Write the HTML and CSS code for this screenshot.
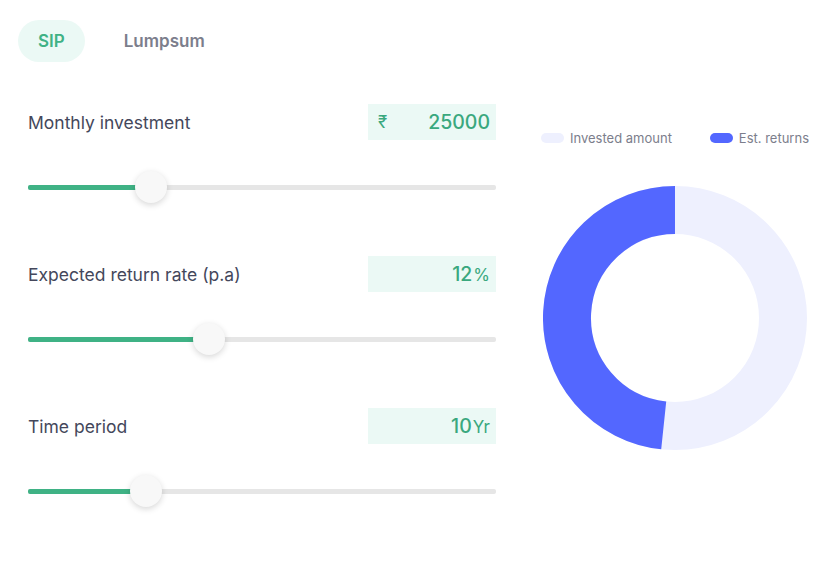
FILE: index.html
```html
<!DOCTYPE html>
<html>
<head>
<meta charset="utf-8">
<link rel="stylesheet" href="styles.css">
</head>
<body>
<div class="calc">
  <div class="tabs">
    <div class="tab active">SIP</div>
    <div class="tab">Lumpsum</div>
  </div>
  <div class="main">
    <div class="inputs">
      <div class="field">
        <div class="field-head">
          <span class="label">Monthly investment</span>
          <div class="valbox"><span class="prefix">₹</span><span class="num">25000</span></div>
        </div>
        <div class="slider">
          <div class="track"><div class="fill" style="width:123px"></div></div>
          <div class="thumb" style="left:107px"></div>
        </div>
      </div>
      <div class="field">
        <div class="field-head">
          <span class="label">Expected return rate (p.a)</span>
          <div class="valbox"><span class="num">12</span><span class="unit">%</span></div>
        </div>
        <div class="slider">
          <div class="track"><div class="fill" style="width:181px"></div></div>
          <div class="thumb" style="left:165px"></div>
        </div>
      </div>
      <div class="field">
        <div class="field-head">
          <span class="label">Time period</span>
          <div class="valbox"><span class="num">10</span><span class="unit">Yr</span></div>
        </div>
        <div class="slider">
          <div class="track"><div class="fill" style="width:118px"></div></div>
          <div class="thumb" style="left:102px"></div>
        </div>
      </div>
    </div>
    <div class="chart">
      <div class="legend">
        <div class="legend-item"><span class="swatch light"></span>Invested amount</div>
        <div class="legend-item"><span class="swatch blue"></span>Est. returns</div>
      </div>
      <svg class="donut" width="264" height="264" viewBox="0 0 264 264">
        <circle cx="132" cy="132" r="108" fill="none" stroke="#eef0fe" stroke-width="48"/>
        <path d="M 120.71 239.41 A 108 108 0 0 1 132 24" fill="none" stroke="#5367ff" stroke-width="48"/>
      </svg>
    </div>
  </div>
</div>
</body>
</html>
```
FILE: styles.css
```css
* { box-sizing: border-box; }
html, body {
  margin: 0;
  background: #ffffff;
  font-family: Inter, "Noto Sans", "Liberation Sans", sans-serif;
}
.calc {
  width: 825px;
  height: 582px;
}
.tabs {
  display: flex;
  gap: 19px;
  padding: 20px 0 0 18px;
}
.tab {
  height: 42px;
  padding: 0 20px;
  border-radius: 21px;
  display: flex;
  align-items: center;
  font-size: 17px;
  font-weight: 600;
  color: #7c7e8c;
}
.tab.active {
  background: #ebf9f5;
  color: #3fb285;
}
.main {
  display: flex;
  padding: 42px 0 0 28px;
}
.inputs {
  width: 468px;
  display: flex;
  flex-direction: column;
  gap: 54px;
}
.field-head {
  display: flex;
  justify-content: space-between;
  align-items: center;
  height: 36px;
}
.label {
  font-size: 17.5px;
  color: #44475b;
}
.valbox {
  width: 128px;
  height: 36px;
  background: #ebf9f5;
  display: flex;
  align-items: center;
  justify-content: flex-end;
  padding: 0 6px 0 10px;
  color: #3aa87e;
  position: relative;
}
.prefix {
  position: absolute;
  left: 10px;
  font-size: 17px;
  font-weight: 400;
}
.num {
  font-size: 19.5px;
  font-weight: 500;
}
.unit {
  font-size: 17px;
  font-weight: 400;
  margin-top: 2px;
  margin-left: 1px;
}
.slider {
  position: relative;
  height: 32px;
  margin-top: 31px;
  margin-bottom: -1px;
  display: flex;
  align-items: center;
}
.track {
  width: 100%;
  height: 5px;
  background: #e6e6e6;
  border-radius: 2px;
}
.fill {
  height: 5px;
  background: #3fb285;
  border-radius: 2px;
}
.thumb {
  position: absolute;
  top: 0;
  width: 32px;
  height: 32px;
  border-radius: 50%;
  background: #f8f8f8;
  box-shadow: 0 2px 6px rgba(0, 0, 0, 0.16);
}
.chart {
  margin-left: 45px;
  width: 268px;
  display: flex;
  flex-direction: column;
  padding-top: 26px;
}
.legend {
  display: flex;
  justify-content: space-between;
  font-size: 13px;
  color: #7c7e8c;
}
.legend-item {
  display: flex;
  align-items: center;
}
.swatch {
  width: 23px;
  height: 10px;
  border-radius: 5px;
  margin-right: 6px;
}
.swatch.light { background: #eef0fe; }
.swatch.blue { background: #5367ff; }
.donut {
  margin-top: 40px;
  margin-left: 2px;
}
```
